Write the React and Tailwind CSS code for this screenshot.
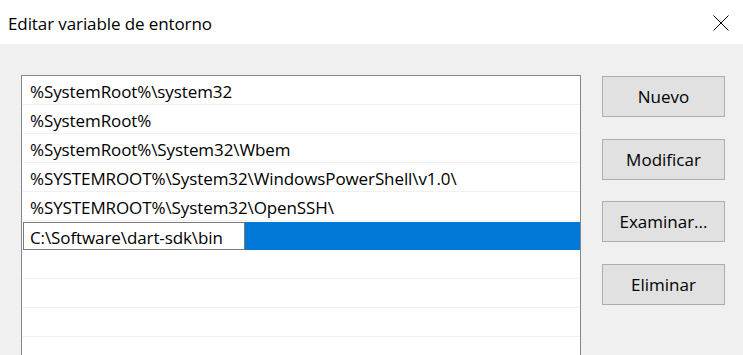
const entries = [
  '%SystemRoot%\\system32',
  '%SystemRoot%',
  '%SystemRoot%\\System32\\Wbem',
  '%SYSTEMROOT%\\System32\\WindowsPowerShell\\v1.0\\',
  '%SYSTEMROOT%\\System32\\OpenSSH\\',
]

const buttons = ['Nuevo', 'Modificar', 'Examinar...', 'Eliminar']

export default function App() {
  return (
    <div className="w-[743px] h-[355px] overflow-hidden bg-[#f0f0f0] text-black font-['Open_Sans','Noto_Sans',sans-serif]">
      {/* title bar */}
      <div className="h-[44px] bg-white flex items-center justify-between pl-2 pr-[14px]">
        <span className="text-[17px] leading-none pt-[2px] tracking-[-0.1px]">Editar variable de entorno</span>
        <svg width="16" height="16" viewBox="0 0 16 16" className="mt-[1px]">
          <path d="M0.5 0.5 L15.5 15.5 M15.5 0.5 L0.5 15.5" stroke="#000" strokeWidth="1" fill="none" />
        </svg>
      </div>

      <div className="flex pl-[21px] pt-[31px]">
        {/* list */}
        <div className="w-[560px] h-[320px] border border-[#828790] bg-white">
          {entries.map((e, i) => (
            <div key={i} className="h-[29px] border-b border-[#f0f0f0] flex items-center pl-2 pt-[3px] text-[17px] tracking-[-0.1px] whitespace-nowrap">
              {e}
            </div>
          ))}
          <div className="h-[29px] border-b border-[#f0f0f0] pl-[1px] pt-[1px]">
            <div className="h-[28px] bg-[#0078d7] flex">
              <div className="w-[222px] h-[28px] bg-white border border-[#7a7a7a] flex items-center pl-[6px] pt-[3px] text-[17px] tracking-[-0.1px] whitespace-nowrap">
                C:\Software\dart-sdk\bin
              </div>
            </div>
          </div>
          {[0, 1, 2].map(i => (
            <div key={i} className="h-[29px] border-b border-[#f0f0f0]" />
          ))}
        </div>

        {/* buttons */}
        <div className="ml-[21px] pt-[1px] flex flex-col gap-[21.7px]">
          {buttons.map(b => (
            <button key={b} className="w-[123px] h-[41px] bg-[#e1e1e1] border border-[#adadad] text-[17px] leading-none">
              {b}
            </button>
          ))}
        </div>
      </div>
    </div>
  )
}
